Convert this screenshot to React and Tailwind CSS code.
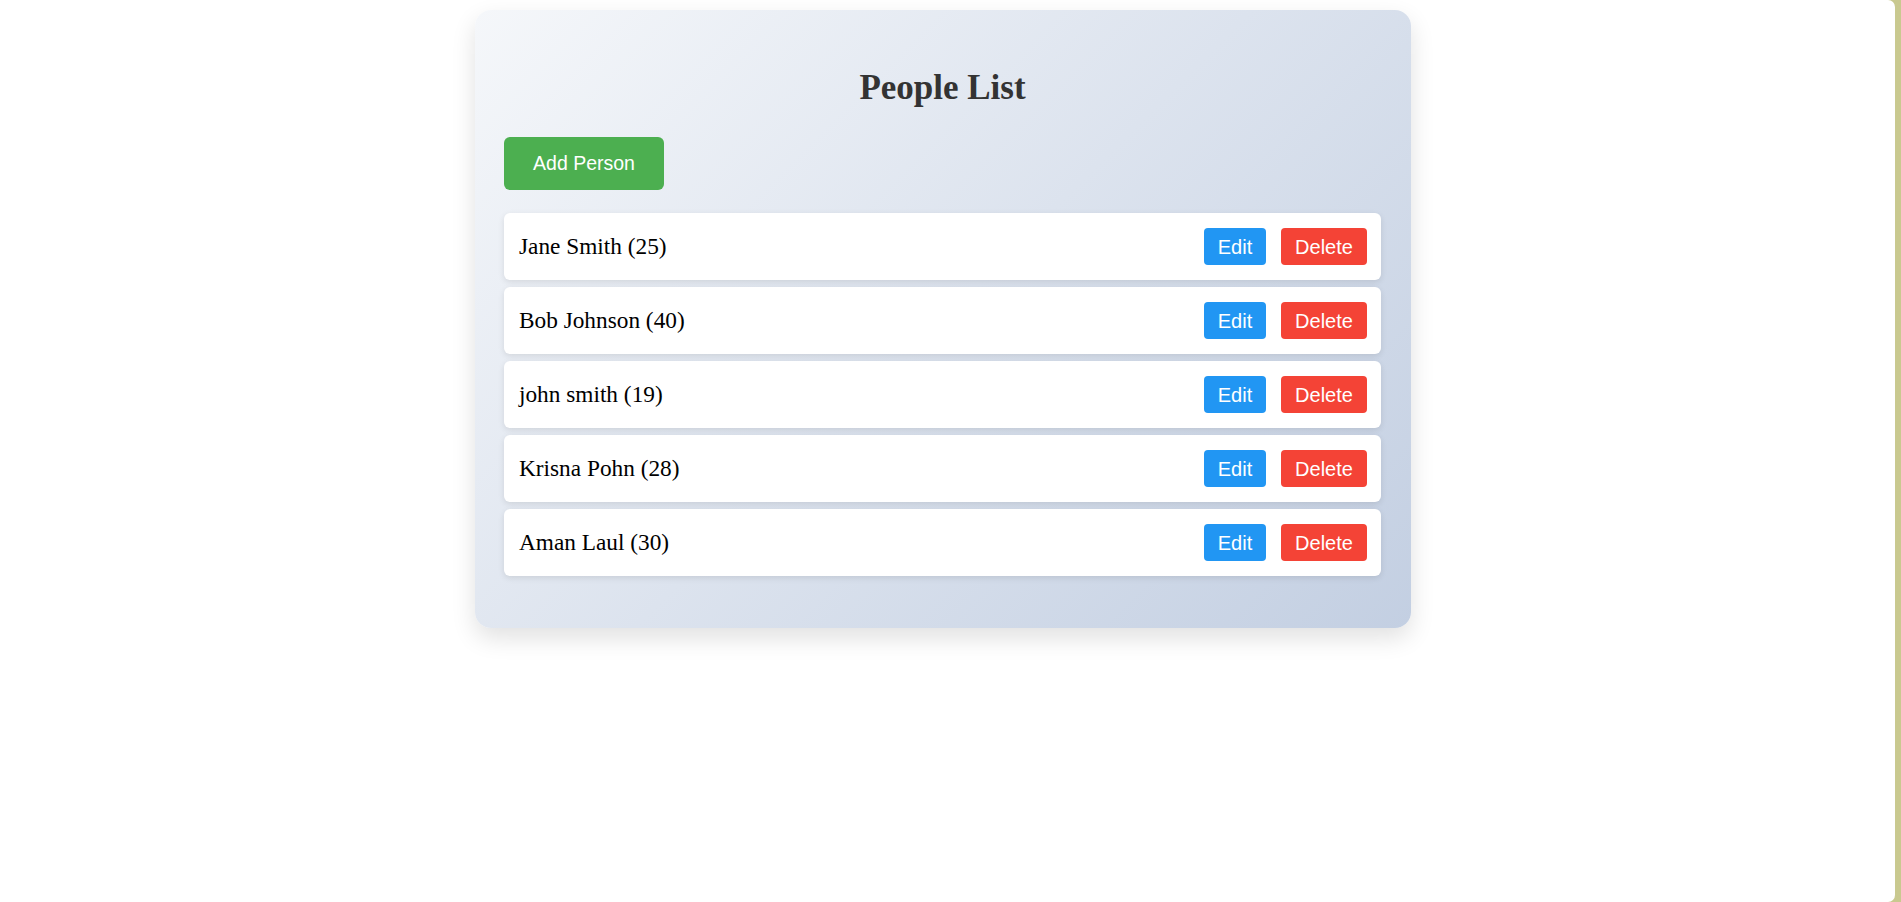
import React, { useState } from 'react';

const initialPeople = [
  { id: 1, name: 'Jane Smith', age: 25 },
  { id: 2, name: 'Bob Johnson', age: 40 },
  { id: 3, name: 'john smith', age: 19 },
  { id: 4, name: 'Krisna Pohn', age: 28 },
  { id: 5, name: 'Aman Laul', age: 30 }
];

export default function App() {
  const [people, setPeople] = useState(initialPeople);

  const handleDelete = (id) => {
    setPeople(people.filter(p => p.id !== id));
  };

  return (
    <div className="flex h-screen bg-[#c9c98f]">
      <div className="flex-1 bg-white rounded-r-[7px] pt-[10px] mr-[6px]">
        <div className="ml-[475px] w-[936px] rounded-[16px] bg-[linear-gradient(135deg,#f5f7fa_0%,#c3cfe2_100%)] shadow-[0_10px_25px_rgba(0,0,0,0.12)] pl-[29px] pr-[30px] pt-[30px] pb-[52px]">
          <h1 className="mt-[28px] text-center text-[35px] leading-[40px] font-bold text-[#333] font-['Liberation_Serif',serif]">
            People List
          </h1>

          <button className="mt-[29px] w-[160px] h-[53px] rounded-[6px] bg-[#4caf50] text-white text-[19.5px] font-['Liberation_Sans',Arial,sans-serif]">
            Add Person
          </button>

          <ul className="mt-[23px] flex flex-col gap-[7px]">
            {people.map(person => (
              <li
                key={person.id}
                className="flex items-center justify-between h-[67px] pl-[15px] pr-[14px] bg-white rounded-[6px] shadow-[0_2px_6px_rgba(0,0,0,0.1)]"
              >
                <span className="text-[23.3px] text-black font-['Liberation_Serif',serif]">
                  {person.name} ({person.age})
                </span>
                <div className="flex gap-[15px] font-['Liberation_Sans',Arial,sans-serif] text-[20px] text-white">
                  <button className="h-[37px] w-[62px] rounded-[4px] bg-[#2196f3]">Edit</button>
                  <button className="h-[37px] w-[86px] rounded-[4px] bg-[#f44336]" onClick={() => handleDelete(person.id)}>
                    Delete
                  </button>
                </div>
              </li>
            ))}
          </ul>
        </div>
      </div>
    </div>
  );
}
